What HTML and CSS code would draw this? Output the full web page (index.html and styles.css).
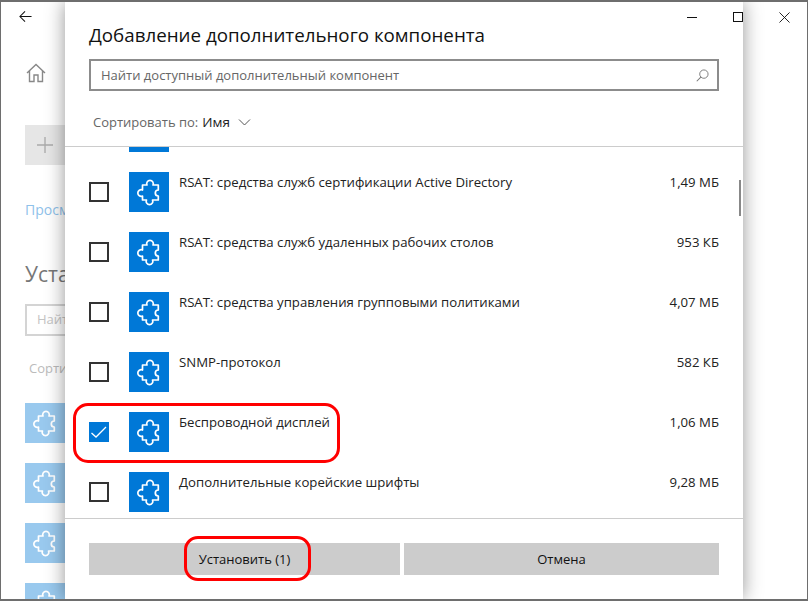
FILE: index.html
```html
<!DOCTYPE html>
<html lang="ru">
<head>
<meta charset="utf-8">
<title>Добавление дополнительного компонента</title>
<link rel="stylesheet" href="styles.css">
</head>
<body>
<svg class="defs" width="0" height="0" aria-hidden="true">
  <symbol id="puzzle" viewBox="0 0 40 40">
    <path d="M18 13A3.300 3.300 0 1 1 24 13H29.300V18A3 3 0 0 0 29.300 24V28H23.500A3.300 3.300 0 1 1 17.500 28H13.500V24A3.300 3.300 0 1 1 13.500 18V13Z" fill="none" stroke="currentColor" stroke-width="1.700" stroke-linejoin="round"/>
  </symbol>
</svg>

<main class="settings">
  <div class="bar">
    <svg class="back" viewBox="0 0 14 14"><path d="M13.500 7H1M6.500 1.500 1 7l5.500 5.500" fill="none" stroke="#111" stroke-width="1.100"/></svg>
  </div>
  <svg class="home" viewBox="0 0 20 20"><path d="M1 10 10 1.500 19 10M3.500 8v10.500h4.500v-6.500h4v6.500h4.500V8" fill="none" stroke="#888" stroke-width="1.400"/></svg>
  <div class="add"><svg viewBox="0 0 16 16"><path d="M8 0v16M0 8h16" stroke="#aaa" stroke-width="1.300"/></svg></div>
  <a class="link">Просмотреть журнал</a>
  <h2 class="heading">Установленные</h2>
  <div class="filter">Найти</div>
  <div class="sort-bg">Сортировать</div>
  <div class="tiles">
    <div class="tile"><svg><use href="#puzzle"/></svg></div>
    <div class="tile"><svg><use href="#puzzle"/></svg></div>
    <div class="tile"><svg><use href="#puzzle"/></svg></div>
    <div class="tile"><svg><use href="#puzzle"/></svg></div>
  </div>
</main>

<div class="behind"></div>

<svg class="win-close" viewBox="0 0 12 12"><path d="M.5.500l11 11M11.500.500l-11 11" stroke="#111" stroke-width="1"/></svg>

<section class="dialog">
  <h1 class="title">Добавление дополнительного компонента</h1>
  <div class="search">
    <span>Найти доступный дополнительный компонент</span>
    <svg viewBox="0 0 14 14"><circle cx="8.500" cy="5.500" r="4.500" fill="none" stroke="#777" stroke-width="1"/><path d="M5.200 8.800.8 13.200" stroke="#777" stroke-width="1.100"/></svg>
  </div>
  <div class="sort">Сортировать по: <b>Имя</b>
    <svg viewBox="0 0 12 7"><path d="M.5.500 6 6 11.500.500" fill="none" stroke="#555" stroke-width="1"/></svg>
  </div>
  <div class="list">
    <div class="stub"></div>
    <div class="row"><span class="box"></span><span class="tile-on"><svg><use href="#puzzle"/></svg></span><span class="name">RSAT: средства служб сертификации Active Directory</span><span class="size">1,49 МБ</span></div>
    <div class="row"><span class="box"></span><span class="tile-on"><svg><use href="#puzzle"/></svg></span><span class="name">RSAT: средства служб удаленных рабочих столов</span><span class="size">953 КБ</span></div>
    <div class="row"><span class="box"></span><span class="tile-on"><svg><use href="#puzzle"/></svg></span><span class="name">RSAT: средства управления групповыми политиками</span><span class="size">4,07 МБ</span></div>
    <div class="row"><span class="box"></span><span class="tile-on"><svg><use href="#puzzle"/></svg></span><span class="name">SNMP-протокол</span><span class="size">582 КБ</span></div>
    <div class="row"><span class="box checked"><svg viewBox="0 0 20 20"><path d="M2.500 11 7 15 17 5" fill="none" stroke="#fff" stroke-width="1.300"/></svg></span><span class="tile-on"><svg><use href="#puzzle"/></svg></span><span class="name">Беспроводной дисплей</span><span class="size">1,06 МБ</span></div>
    <div class="row"><span class="box"></span><span class="tile-on"><svg><use href="#puzzle"/></svg></span><span class="name">Дополнительные корейские шрифты</span><span class="size">9,28 МБ</span></div>
    <div class="thumb"></div>
  </div>
  <div class="actions">
    <button class="btn">Установить (1)</button>
    <button class="btn">Отмена</button>
  </div>
  <svg class="win-min" viewBox="0 0 10 1"><path d="M0 .5h10" stroke="#111"/></svg>
  <div class="win-max"></div>
</section>

<div class="mark mark-row"></div>
<div class="mark mark-btn"></div>
</body>
</html>
```

FILE: styles.css
```css
* { box-sizing: border-box; }
html, body { margin: 0; height: 100%; }
body {
  position: relative;
  width: 808px;
  height: 601px;
  overflow: hidden;
  background: #fff;
  font-family: "Open Sans", "Noto Sans", sans-serif;
  border: solid #6e6e6e;
  border-width: 2px 1px 2px 1px;
}
.defs { position: absolute; }

.settings { padding-left: 24px; color: #8a8a8a; font-size: 13px; height: 100%; overflow: hidden; }
.bar { height: 27px; display: flex; align-items: center; }
.back { width: 13px; height: 13px; margin: 1px 0 0 -6px; }
.home { display: block; width: 20px; height: 20px; margin: 34px 0 0 1px; }
.add { width: 40px; height: 40px; margin-top: 42px; background: #e6e6e6; display: flex; align-items: center; justify-content: center; }
.add svg { width: 16px; height: 16px; }
.link { display: block; margin: 35px 0 0 0; color: #8fc1ea; font-size: 14px; white-space: nowrap; }
.heading { margin: 41px 0 0 0; font-size: 21px; font-weight: 400; color: #777; white-space: nowrap; }
.filter { width: 120px; height: 32px; margin: 16px 0 0 0; border: 2px solid #d4d4d4; padding: 4px 10px; font-size: 13px; color: #c4c4c4; }
.sort-bg { margin: 23px 0 0 4px; color: #bbb; font-size: 13px; }
.tiles { display: flex; flex-direction: column; gap: 20px; margin: 26px 0 0 0; }
.tile { width: 40px; height: 40px; background: #99c9ee; color: #fff; flex: none; }
.tile svg, .tile-on svg { display: block; width: 40px; height: 40px; }

body::before, body::after { content: ""; position: absolute; top: 8px; width: 1px; height: 40px; background: #2b6b7c; }
body::before { left: -1px; }
body::after { right: -1px; }

.behind {
  position: absolute;
  left: 4px;
  bottom: -2px;
  width: 650px;
  height: 2px;
  background: repeating-linear-gradient(90deg, #444 0 3px, #aaa 3px 5px, #666 5px 7px, #ccc 7px 9px);
}
.win-close { position: absolute; left: 778px; top: 10px; width: 11px; height: 11px; }

.dialog {
  position: absolute;
  left: 64px;
  top: 0;
  width: 678px;
  height: 597px;
  background: #fff;
  box-shadow: 0 0 18px rgba(0,0,0,.42);
  display: flex;
  flex-direction: column;
  padding-top: 20px;
}
.title { margin: 0 0 0 24px; font-size: 18.750px; line-height: 26px; font-weight: 400; color: #111; white-space: nowrap; }
.search {
  margin: 11px 24px 0;
  height: 32px;
  border: 2px solid #8c8c8c;
  display: flex;
  align-items: center;
  justify-content: space-between;
  padding: 0 8px 0 10px;
  font-size: 13px;
  color: #666;
}
.search svg { width: 13px; height: 13px; }
.sort { margin: 22px 0 0 28px; height: 33px; font-size: 13px; color: #666; display: flex; align-items: flex-start; gap: 4px; line-height: 18px; }
.sort b { font-weight: 400; color: #222; font-size: 13.500px; }
.sort svg { width: 13px; height: 7px; margin: 6px 0 0 4px; }
.list { position: relative; flex: 1; overflow: hidden; border-top: 1px solid #ccc; border-bottom: 1px solid #ccc; }
.stub { width: 40px; height: 5px; margin: 0 0 20px 64px; background: #0078d7; }
.row { display: flex; height: 60px; position: relative; }
.box { flex: none; width: 20px; height: 20px; margin: 10px 20px 0 24px; border: 2px solid #333; }
.box.checked { background: #0078d7; border-color: #0078d7; }
.box.checked svg { display: block; width: 20px; height: 20px; margin: -2px; }
.tile-on { flex: none; width: 40px; height: 40px; background: #0078d7; color: #fff; }
.name { margin-left: 10px; flex: 1; font-size: 13.200px; line-height: 20px; color: #222; white-space: nowrap; }
.size { width: 100px; margin-right: 24px; text-align: right; font-size: 13.200px; line-height: 20px; color: #222; }
.thumb { position: absolute; right: 2px; top: 33px; width: 2px; height: 36px; background: #888; }
.actions { display: grid; grid-template-columns: 311px 1fr; gap: 4px; padding: 24px; }
.btn { height: 32px; border: 0; background: #ccc; font: inherit; font-size: 13px; color: #111; }
.win-min { position: absolute; left: 622px; top: 15px; width: 10px; height: 1px; }
.win-max { position: absolute; left: 668px; top: 10px; width: 10px; height: 10px; border: 1px solid #111; }

.mark { position: absolute; border: 3px solid #f00; }
.mark-row { left: 72px; top: 401px; width: 267px; height: 60px; border-radius: 15px; }
.mark-btn { left: 183px; top: 534px; width: 127px; height: 45px; border-radius: 14px; }
```
